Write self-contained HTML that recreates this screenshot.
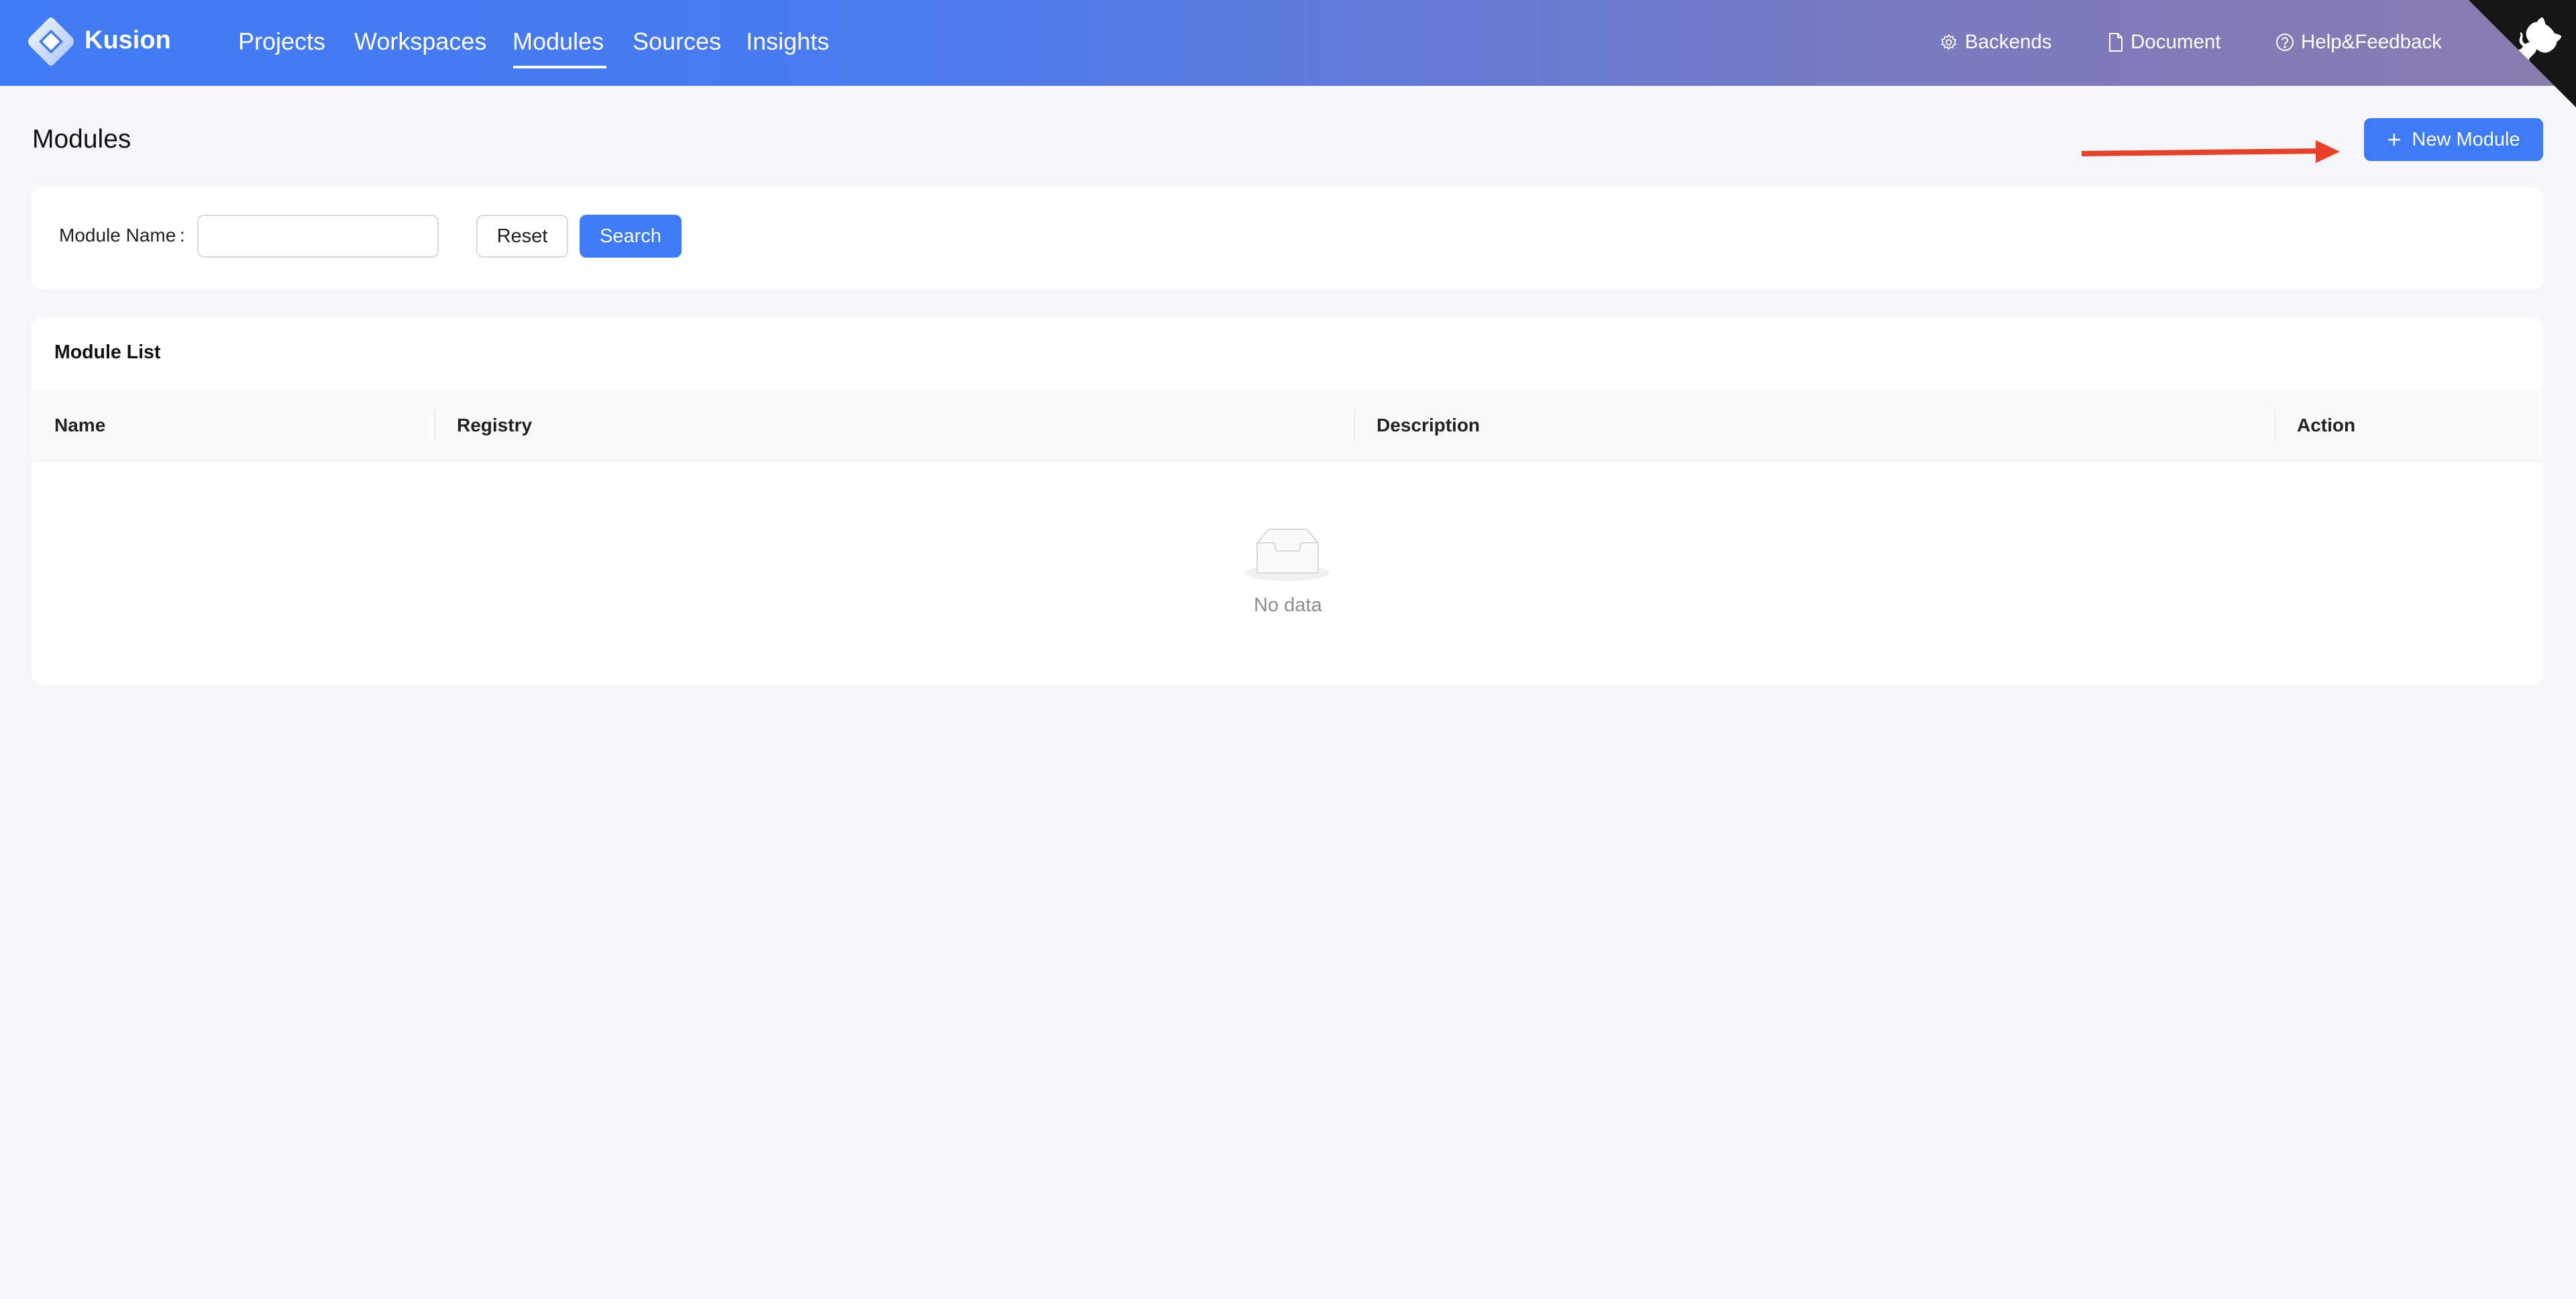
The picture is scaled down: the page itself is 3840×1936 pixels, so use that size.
<!DOCTYPE html>
<html><head><meta charset="utf-8"><style>
*{box-sizing:border-box;margin:0;padding:0}
body{width:3840px;height:1936px;background:#f5f6f9;font-family:"Liberation Sans",sans-serif;position:relative;overflow:hidden}
.hdr{position:absolute;left:0;top:0;width:3840px;height:128px;background:linear-gradient(90deg,#3f7bf5 0%,#4a7aee 35%,#7a7bbf 75%,#8c7caf 100%)}
.a{position:absolute;white-space:nowrap}
.nav{color:#fff;font-size:36px;top:41px}
.rn{color:#fff;font-size:29.5px;top:46px}
.card{position:absolute;background:#fff;border-radius:16px}
.btn{position:absolute;border-radius:10px;font-size:29px;display:flex;align-items:center;justify-content:center}
.th{position:absolute;top:0;height:108px;line-height:108px;font-size:28px;font-weight:bold;color:#222}
.sep{position:absolute;top:30px;width:2px;height:48px;background:#ececec}
</style></head><body>
<div class="hdr"></div>
<svg class="a" style="left:36px;top:24px" width="80" height="76" viewBox="0 0 80 76">
<defs><linearGradient id="g" x1="0" y1="0" x2="1" y2="1"><stop offset="0" stop-color="#fff" stop-opacity=".95"/><stop offset="1" stop-color="#fff" stop-opacity=".55"/></linearGradient></defs>
<path d="M36 4 Q40 0 44 4 L72 32 Q76 38 72 44 L44 72 Q40 76 36 72 L8 44 Q4 38 8 32 Z M40 20 L22 38 L40 56 L58 38 Z" fill="url(#g)" fill-rule="evenodd"/>
<path d="M40 27 L51 38 L40 49 L29 38 Z" fill="#fff" stroke="#fff" stroke-width="3" stroke-linejoin="round"/>
</svg>
<div class="a" style="left:126px;top:39px;color:#fff;font-size:38px;font-weight:bold">Kusion</div>
<div class="a nav" style="left:355px">Projects</div>
<div class="a nav" style="left:528px">Workspaces</div>
<div class="a nav" style="left:764px">Modules</div>
<div class="a nav" style="left:943px">Sources</div>
<div class="a nav" style="left:1112px">Insights</div>
<div class="a" style="left:765px;top:98px;width:139px;height:4px;background:#fff"></div>
<svg class="a" style="left:2892px;top:49px" width="26" height="28" viewBox="0 0 24 24" fill="none" stroke="#fff" stroke-width="1.6"><circle cx="12" cy="12" r="3.5"/><path d="M12 2l2 3 3.5-1 .5 3.5 3.5 1-1.5 3.5 1.5 3-3.5 1-.5 3.5-3.5-1-2 3-2-3-3.5 1-.5-3.5-3.5-1 1.5-3-1.5-3.5 3.5-1 .5-3.5 3.5 1z"/></svg>
<div class="a rn" style="left:2929px">Backends</div>
<svg class="a" style="left:3143px;top:48px" width="22" height="30" viewBox="0 0 22 30" fill="none" stroke="#fff" stroke-width="2"><path d="M2 2h12l6 6v20H2z M14 2v6h6"/></svg>
<div class="a rn" style="left:3176px">Document</div>
<svg class="a" style="left:3392px;top:49px" width="28" height="28" viewBox="0 0 28 28" fill="none" stroke="#fff" stroke-width="2"><circle cx="14" cy="14" r="12"/><path d="M10 11a4 4 0 1 1 5 4c-1 .5-1 1-1 3"/><circle cx="14" cy="21" r=".8" fill="#fff"/></svg>
<div class="a rn" style="left:3430px">Help&amp;Feedback</div>
<svg class="a" style="left:3680px;top:0" width="160" height="160" viewBox="0 0 250 250"><path d="M0,0 L115,115 L130,115 L142,142 L250,250 L250,0 Z" fill="#151513"/><path d="M128.3,109.0 C113.8,99.7 119.0,89.6 119.0,89.6 C122.0,82.7 120.5,78.6 120.5,78.6 C119.2,72.0 123.4,76.3 123.4,76.3 C127.3,80.9 125.5,87.3 125.5,87.3 C122.9,97.6 130.6,101.9 134.4,103.2" fill="#fff"/><path d="M115.0,115.0 C114.9,115.1 118.7,116.5 119.8,115.4 L133.7,101.6 C136.9,99.2 139.9,98.4 142.2,98.6 C133.8,88.0 127.5,74.4 143.8,58.0 C148.5,53.4 154.0,51.2 159.7,51.0 C160.3,49.4 163.2,43.6 171.4,40.1 C171.4,40.1 176.1,42.5 178.8,56.2 C183.1,58.6 187.2,61.8 190.9,65.4 C194.5,69.0 197.7,73.2 200.1,77.6 C213.8,80.2 216.3,84.9 216.3,84.9 C212.7,93.1 206.9,96.0 205.4,96.6 C205.1,102.4 203.0,107.8 198.3,112.5 C181.9,128.9 168.3,122.5 157.7,114.1 C157.9,116.9 156.7,120.9 152.7,124.9 L141.0,136.5 C139.8,137.7 141.6,141.9 141.8,141.8 Z" fill="#fff"/></svg>
<div class="a" style="left:48px;top:186px;font-size:39px;color:#111">Modules</div>
<svg class="a" style="left:3100px;top:205px" width="392" height="42"><line x1="3" y1="24" x2="360" y2="20" stroke="#e8412a" stroke-width="8"/><path d="M352 4 L388 21 L352 38 Z" fill="#e8412a"/></svg>
<div class="btn" style="left:3524px;top:176px;width:267px;height:64px;background:#3d7bf7;color:#fff"><span style="font-size:36px;margin-right:16px;font-weight:300">+</span>New Module</div>
<div class="card" style="left:47px;top:279px;width:3744px;height:152px"></div>
<div class="a" style="left:88px;top:335px;font-size:28px;color:#222">Module Name&thinsp;:</div>
<div class="a" style="left:294px;top:320px;width:360px;height:64px;border:2px solid #d9d9d9;border-radius:10px;background:#fff"></div>
<div class="btn" style="left:710px;top:320px;width:137px;height:64px;border:2px solid #d9d9d9;background:#fff;color:#222">Reset</div>
<div class="btn" style="left:864px;top:320px;width:152px;height:64px;background:#3d7bf7;color:#fff">Search</div>
<div class="card" style="left:47px;top:472px;width:3744px;height:549px"></div>
<div class="a" style="left:81px;top:509px;font-size:28.5px;font-weight:bold;color:#111">Module List</div>
<div class="a" style="left:47px;top:580px;width:3744px;height:108px;background:#fafafa;border-bottom:2px solid #f0f0f0">
<div class="th" style="left:34px">Name</div><div class="sep" style="left:600px"></div>
<div class="th" style="left:634px">Registry</div><div class="sep" style="left:1971px"></div>
<div class="th" style="left:2005px">Description</div><div class="sep" style="left:3343px"></div>
<div class="th" style="left:3377px">Action</div></div>
<svg class="a" style="left:1855px;top:784px" width="130" height="84" viewBox="0 0 130 84"><ellipse cx="64" cy="70" rx="63" ry="12" fill="#f0f0f0"/><path d="M19 25 L36 5 H93 L110 25 V66 Q110 70 106 70 H23 Q19 70 19 66 Z" fill="#fafafa" stroke="#d9d9d9" stroke-width="2"/><path d="M19 25 H42 Q46 25 46 30 V33 Q46 37 50 37 H79 Q83 37 83 33 V30 Q83 25 87 25 H110" fill="none" stroke="#d9d9d9" stroke-width="2"/></svg>
<div class="a" style="left:1869px;top:886px;font-size:29px;color:#8c8c8c">No data</div>
</body></html>
